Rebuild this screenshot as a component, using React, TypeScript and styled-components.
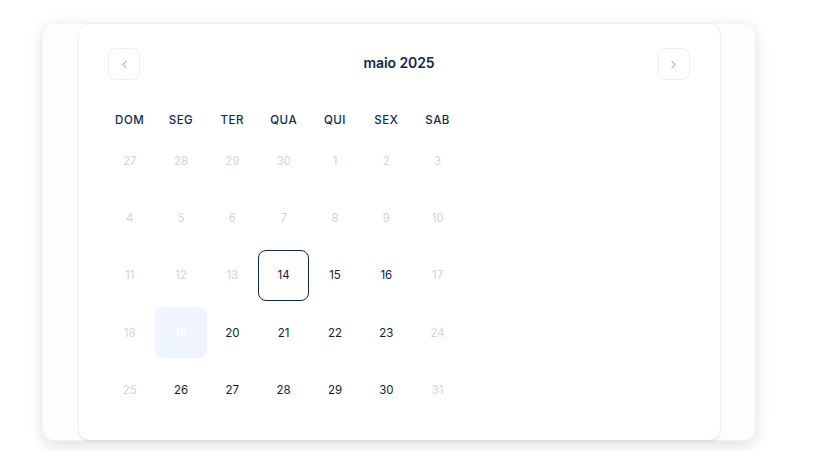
import React from "react";
import styled, { createGlobalStyle } from "styled-components";
import { ChevronLeft, ChevronRight } from "lucide-react";

const Global = createGlobalStyle`
  html, body { margin: 0; padding: 0; background: #ffffff; }
  body { font-family: Inter, "Noto Sans", "DejaVu Sans", sans-serif; }
`;

const Page = styled.div`
  padding: 23px 0 0 42px;
  height: 451px;
  box-sizing: border-box;
  overflow: hidden;
`;

const Outer = styled.div`
  width: 714px;
  height: 418px;
  box-sizing: border-box;
  background: #fdfdfd;
  border: 1px solid #f1f2f4;
  border-radius: 12px;
  box-shadow: 0 5px 14px rgba(0, 0, 0, 0.1), 0 0 24px rgba(0, 0, 0, 0.03);
  padding-left: 36px;
  display: flex;
`;

const Inner = styled.div`
  width: 641px;
  height: 416px;
  box-sizing: border-box;
  background: #ffffff;
  border-radius: 10px;
  box-shadow: 0 1px 3px rgba(0, 0, 0, 0.12), 0 0 1px rgba(0, 0, 0, 0.06);
  padding: 24px 30px 0 25px;
  display: flex;
  flex-direction: column;
`;

const Header = styled.div`
  display: flex;
  align-items: center;
  justify-content: space-between;
  padding-left: 4px;
  height: 32px;
`;

const NavButton = styled.button`
  width: 32px;
  height: 32px;
  box-sizing: border-box;
  border: 1px solid #eef0f4;
  border-radius: 8px;
  background: #ffffff;
  display: flex;
  align-items: center;
  justify-content: center;
  padding: 0;
  color: #6b7a90;
`;

const Title = styled.div`
  font-size: 14px;
  font-weight: 600;
  color: #10264a;
  letter-spacing: -0.1px;
  margin-top: -3px;
`;

const Grid = styled.div`
  margin-top: 30px;
  display: grid;
  grid-template-columns: repeat(7, 51.33px);
  row-gap: 6px;
`;

const WeekLabel = styled.div`
  height: 20px;
  display: flex;
  align-items: center;
  justify-content: center;
  font-size: 11.5px;
  font-weight: 500;
  color: #0e2a52;
  letter-spacing: 0.5px;
  margin-bottom: -1px;
`;

type Kind = "out" | "in" | "today" | "selected";

const Day = styled.div<{ $kind: Kind }>`
  height: 51.33px;
  box-sizing: border-box;
  display: flex;
  align-items: center;
  justify-content: center;
  font-size: 11.5px;
  font-weight: 400;
  border-radius: 8px;
  color: ${(p) =>
    p.$kind === "out" ? "#d0d5de" : p.$kind === "selected" ? "#ffffff" : "#121c33"};
  background: ${(p) => (p.$kind === "selected" ? "#eef5ff" : "transparent")};
  border: ${(p) => (p.$kind === "today" ? "1px solid #102a56" : "1px solid transparent")};
`;

const weekdays = ["DOM", "SEG", "TER", "QUA", "QUI", "SEX", "SAB"];

type Cell = { n: number; k: Kind };

const rows: Cell[][] = [
  [27, 28, 29, 30, 1, 2, 3].map((n) => ({ n, k: "out" as Kind })),
  [4, 5, 6, 7, 8, 9, 10].map((n) => ({ n, k: "out" as Kind })),
  [
    { n: 11, k: "out" },
    { n: 12, k: "out" },
    { n: 13, k: "out" },
    { n: 14, k: "today" },
    { n: 15, k: "in" },
    { n: 16, k: "in" },
    { n: 17, k: "out" },
  ],
  [
    { n: 18, k: "out" },
    { n: 19, k: "selected" },
    { n: 20, k: "in" },
    { n: 21, k: "in" },
    { n: 22, k: "in" },
    { n: 23, k: "in" },
    { n: 24, k: "out" },
  ],
  [
    { n: 25, k: "out" },
    { n: 26, k: "in" },
    { n: 27, k: "in" },
    { n: 28, k: "in" },
    { n: 29, k: "in" },
    { n: 30, k: "in" },
    { n: 31, k: "out" },
  ],
];

export default function App() {
  return (
    <>
      <Global />
      <Page>
        <Outer>
          <Inner>
            <Header>
              <NavButton aria-label="Mês anterior">
                <ChevronLeft size={13} strokeWidth={1.6} />
              </NavButton>
              <Title>maio 2025</Title>
              <NavButton aria-label="Próximo mês">
                <ChevronRight size={13} strokeWidth={1.6} />
              </NavButton>
            </Header>
            <Grid>
              {weekdays.map((w) => (
                <WeekLabel key={w}>{w}</WeekLabel>
              ))}
              {rows.flat().map((c, i) => (
                <Day key={i} $kind={c.k}>
                  {c.n}
                </Day>
              ))}
            </Grid>
          </Inner>
        </Outer>
      </Page>
    </>
  );
}
